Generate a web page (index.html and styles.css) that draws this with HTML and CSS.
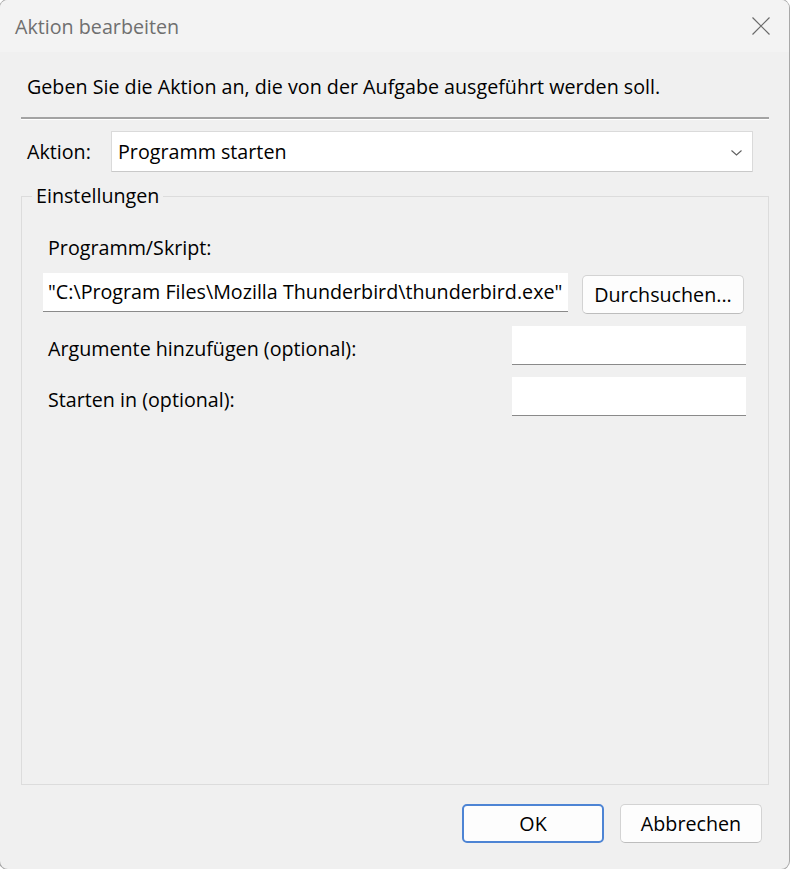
FILE: index.html
```html
<!DOCTYPE html>
<html lang="de">
<head>
    <meta charset="UTF-8">
    <meta name="viewport" content="width=device-width, initial-scale=1.0">
    <title>Aktion bearbeiten</title>
    <link rel="stylesheet" href="styles.css">
</head>
<body>
    <div class="window">
        <!-- Title bar -->
        <div class="titlebar">
            <span class="title">Aktion bearbeiten</span>
            <svg class="close" width="18" height="18" viewBox="0 0 18 18">
                <path d="M0.5 0.5 L17.5 17.5 M17.5 0.5 L0.5 17.5" stroke="#6a6a6a" stroke-width="1.2" fill="none"/>
            </svg>
        </div>

        <div class="content">
            <p class="intro">Geben Sie die Aktion an, die von der Aufgabe ausgeführt werden soll.</p>
            <div class="separator"></div>

            <div class="action-row">
                <label class="action-label">Aktion:</label>
                <div class="select">
                    <span>Programm starten</span>
                    <svg width="11" height="6" viewBox="0 0 11 6">
                        <polyline points="0.5,0.5 5.5,5 10.5,0.5" stroke="#606060" stroke-width="1.1" fill="none"/>
                    </svg>
                </div>
            </div>

            <fieldset class="settings">
                <legend>Einstellungen</legend>

                <label class="field-label">Programm/Skript:</label>
                <div class="program-row">
                    <div class="textbox program">"C:\Program Files\Mozilla Thunderbird\thunderbird.exe"</div>
                    <button class="btn browse">Durchsuchen...</button>
                </div>

                <div class="option-row first">
                    <label class="field-label">Argumente hinzufügen (optional):</label>
                    <div class="textbox small"></div>
                </div>
                <div class="option-row">
                    <label class="field-label">Starten in (optional):</label>
                    <div class="textbox small"></div>
                </div>
            </fieldset>
        </div>

        <div class="footer">
            <button class="btn ok">OK</button>
            <button class="btn">Abbrechen</button>
        </div>
    </div>
</body>
</html>
```

FILE: styles.css
```css
body {
    margin: 0;
    padding: 0;
    background-color: #ffffff;
    font-family: "Open Sans", "Noto Sans", Arial, sans-serif;
    font-size: 19.7px;
    color: #000;
}
.window {
    width: 789px;
    height: 869px;
    background-color: #f0f0f0;
    border-radius: 8px;
    box-shadow: 0 0 0 1px #a8a8a8;
    overflow: hidden;
    display: flex;
    flex-direction: column;
}
.titlebar {
    height: 52px;
    background-color: #f3f3f3;
    display: flex;
    align-items: center;
    justify-content: space-between;
    padding: 0 19px 0 15px;
    flex-shrink: 0;
}
.title {
    color: #6f6f6f;
    font-size: 19.7px;
}
.close {
    display: block;
}
.content {
    flex: 1;
    display: flex;
    flex-direction: column;
    padding: 0 20px 0 21px;
}
.intro {
    margin: 22px 0 0 6px;
    line-height: 26px;
}
.separator {
    margin-top: 17px;
    border-top: 2px solid #a3a3a3;
    border-bottom: 1px solid #ffffff;
}
.action-row {
    display: flex;
    align-items: center;
    margin-top: 11px;
}
.action-label {
    width: 90px;
    box-sizing: border-box;
    padding-left: 6px;
}
.select {
    flex: 1;
    height: 39px;
    margin-right: 16px;
    background-color: #fff;
    border: 1px solid #dadada;
    border-bottom-color: #c9c9c9;
    border-radius: 1px;
    display: flex;
    align-items: center;
    justify-content: space-between;
    padding: 0 10px 0 6px;
}
.select svg {
    margin-top: 2px;
}
.settings {
    flex: 1;
    margin: 12px 0 0 0;
    padding: 28px 22px 0 21px;
    border: 1px solid #dcdcdc;
    min-width: 0;
}
.settings legend {
    margin-left: -11px;
    padding: 0 4px;
    line-height: 24px;
}
.field-label {
    display: block;
    padding-left: 5px;
    line-height: 24px;
}
.program-row {
    display: flex;
    align-items: flex-start;
    margin-top: 13px;
}
.textbox {
    background-color: #fff;
    border-bottom: 1px solid #8a8a8a;
    box-sizing: border-box;
}
.program {
    width: 525px;
    height: 39px;
    line-height: 38px;
    padding-left: 5px;
    white-space: nowrap;
    overflow: hidden;
}
.option-row {
    display: flex;
    align-items: center;
    justify-content: space-between;
    margin-top: 12px;
}
.option-row.first {
    margin-top: 12px;
}
.option-row .field-label {
    margin-top: 6px;
}
.small {
    width: 234px;
    height: 39px;
    margin-right: 0;
}
.btn {
    font-family: inherit;
    font-size: 19.7px;
    color: #000;
    background-color: #fdfdfd;
    border: 1px solid #d3d3d3;
    border-bottom-color: #bdbdbd;
    border-radius: 5px;
    height: 39px;
    padding: 0;
    cursor: pointer;
}
.browse {
    width: 162px;
    margin-left: 14px;
    margin-top: 2px;
}
.footer {
    height: 84px;
    flex-shrink: 0;
    display: flex;
    justify-content: flex-end;
    align-items: flex-start;
    gap: 16px;
    padding: 19px 27px 0 0;
    box-sizing: border-box;
}
.footer .btn {
    width: 142px;
}
.btn.ok {
    border: 2px solid #4d84d4;
}
```
